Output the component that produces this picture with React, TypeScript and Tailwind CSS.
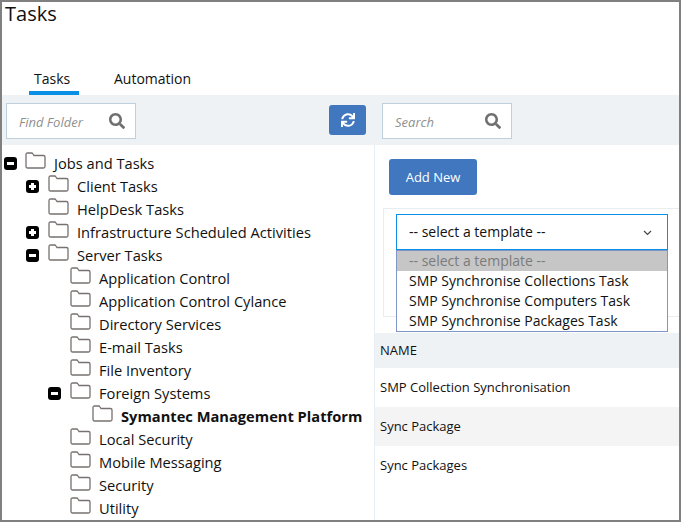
import React from "react";
import { FaSearch, FaSync } from "react-icons/fa";

const tree = [
  { name: "Jobs and Tasks", depth: 0, toggle: "minus" },
  { name: "Client Tasks", depth: 1, toggle: "plus" },
  { name: "HelpDesk Tasks", depth: 1 },
  { name: "Infrastructure Scheduled Activities", depth: 1, toggle: "plus" },
  { name: "Server Tasks", depth: 1, toggle: "minus" },
  { name: "Application Control", depth: 2 },
  { name: "Application Control Cylance", depth: 2 },
  { name: "Directory Services", depth: 2 },
  { name: "E-mail Tasks", depth: 2 },
  { name: "File Inventory", depth: 2 },
  { name: "Foreign Systems", depth: 2, toggle: "minus" },
  { name: "Symantec Management Platform", depth: 3, bold: true },
  { name: "Local Security", depth: 2 },
  { name: "Mobile Messaging", depth: 2 },
  { name: "Security", depth: 2 },
  { name: "Utility", depth: 2 },
];

const indent = ["ml-[23px]", "ml-[46px]", "ml-[68px]", "ml-[90px]"];
const togglePos = ["left-[2px]", "left-[24px]", "left-[46px]", "left-[68px]"];

const Folder = () => (
  <svg width="21" height="17" viewBox="0 0 21 17" fill="none" className="shrink-0">
    <path
      d="M1 14.5V2.5C1 1.6 1.6 1 2.5 1H6.5C7.2 1 7.6 1.3 8 2L9 3.5H18.5C19.4 3.5 20 4.1 20 5V14.5C20 15.4 19.4 16 18.5 16H2.5C1.6 16 1 15.4 1 14.5Z"
      stroke="#77716f"
      strokeWidth="1.3"
    />
  </svg>
);

const Toggle = ({ type }: { type: string }) => (
  <span className="relative block w-[13px] h-[13px] rounded-[3px] bg-black">
    <span className="absolute left-[3px] top-[5px] w-[7px] h-[3px] bg-white" />
    {type === "plus" && <span className="absolute left-[5px] top-[3px] w-[3px] h-[7px] bg-white" />}
  </span>
);

const SearchBox = ({ placeholder, className }: { placeholder: string; className: string }) => (
  <div className={`flex items-center justify-between w-[130px] h-9 mt-[2px] bg-white border border-[#c0cfdc] pl-[12px] pr-[10px] ${className}`}>
    <span className="pt-[4px] text-[13px] italic text-[#8f8f8f]">{placeholder}</span>
    <FaSearch className="w-4 h-4 text-[#6f6f6f]" />
  </div>
);

export default function App() {
  return (
    <div
      className="w-[681px] h-[522px] overflow-hidden bg-white border-2 border-[#808080] text-[#111] flex flex-col"
      style={{ fontFamily: '"Open Sans", sans-serif' }}
    >
      <h1 className="h-[50px] pl-[3px] text-[20px] leading-[23px] font-normal">Tasks</h1>

      <div className="flex h-[43px] pl-[27px]">
        <div className="w-[50px] h-[43px] border-b-4 border-[#0a8fe6] pl-[5px] text-[14px] leading-[54px]">Tasks</div>
        <div className="ml-[35px] text-[14px] leading-[54px] h-[43px]">Automation</div>
      </div>

      {/* toolbar */}
      <div className="flex items-center h-[50px] bg-[#eff2f5] pl-[4px]">
        <SearchBox placeholder="Find Folder" className="" />
        <button className="ml-[193px] flex items-center justify-center w-[37px] h-[30px] rounded-[3px] bg-[#4177bf] text-white">
          <FaSync className="w-[14px] h-[14px]" />
        </button>
        <SearchBox placeholder="Search" className="ml-[16px]" />
      </div>

      <div className="flex flex-1 min-h-0">
        {/* folder tree */}
        <div className="w-[373px] shrink-0 pt-[7px] overflow-hidden border-r border-[#e8eef4]">
          {tree.map((item) => (
            <div key={item.name} className="relative flex items-center h-[23px] whitespace-nowrap">
              {item.toggle && (
                <span className={`absolute top-[5px] ${togglePos[item.depth]}`}>
                  <Toggle type={item.toggle} />
                </span>
              )}
              <span className={`flex items-center gap-[8px] ${indent[item.depth]}`}>
                <span className="relative top-[-3px]">
                  <Folder />
                </span>
                <span className={`text-[14.67px] leading-[23px] ${item.bold ? "font-bold" : ""}`}>{item.name}</span>
              </span>
            </div>
          ))}
        </div>

        {/* task pane */}
        <div className="relative flex-1 min-w-0">
          <div className="pt-[14px] pl-[14px]">
            <button className="w-[88px] h-9 rounded-[3px] bg-[#4177bf] pt-px text-white text-[13px]">Add New</button>
          </div>

          <div className="mt-[13px] ml-[8px] h-[109px] border border-r-0 border-[#e8edf2] pt-[5px] pl-[12px]">
            <div className="flex items-center justify-between w-[272px] h-9 border border-[#0a8fe6] bg-white pl-[12px] pr-[15px] text-[14px]">
              <span className="pb-[2px]">-- select a template --</span>
              <svg width="9" height="6" viewBox="0 0 9 6" fill="none" className="mt-[2px]">
                <path d="M1 1L4.5 4.5L8 1" stroke="#444" strokeWidth="1.2" />
              </svg>
            </div>
          </div>

          {/* open dropdown list */}
          <div className="absolute left-[21px] top-[105px] w-[272px] h-[82px] border border-[#7f94c9] bg-white text-[14px] leading-[20px]">
            <div className="h-[20px] bg-[#c6c6c6] pl-[12px] text-[#7b7b7b]">-- select a template --</div>
            <div className="pl-[12px]">SMP Synchronise Collections Task</div>
            <div className="pl-[12px]">SMP Synchronise Computers Task</div>
            <div className="pl-[12px]">SMP Synchronise Packages Task</div>
          </div>

          <div className="mt-[16px] h-[35px] bg-[#eff2f5] pl-[5px] text-[13px] leading-[35px]">NAME</div>
          <div className="h-[39px] pl-[5px] text-[13px] leading-[39px]">SMP Collection Synchronisation</div>
          <div className="h-[39px] bg-[#f4f4f4] pl-[5px] text-[13px] leading-[39px]">Sync Package</div>
          <div className="h-[39px] pl-[5px] text-[13px] leading-[39px]">Sync Packages</div>
        </div>
      </div>
    </div>
  );
}
